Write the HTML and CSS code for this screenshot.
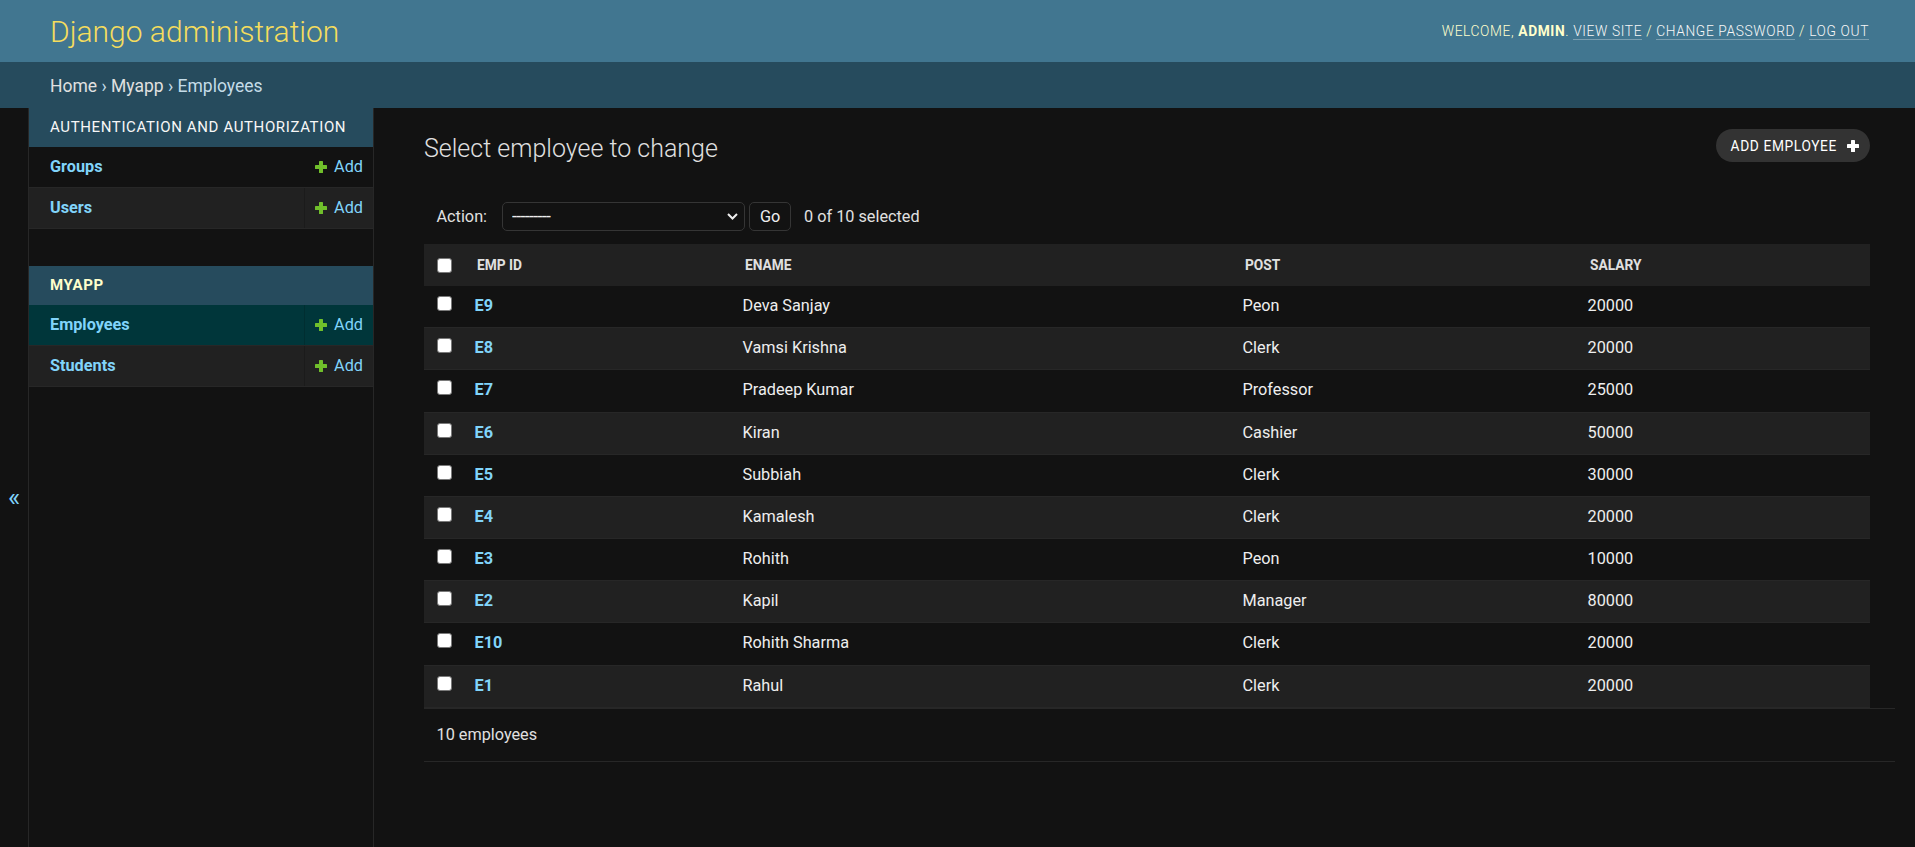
FILE: index.html
```html
<!DOCTYPE html>
<html lang="en">
<head>
<meta charset="utf-8">
<title>Select employee to change | Django site admin</title>
<link rel="stylesheet" href="styles.css">
</head>
<body>
<header class="site-header">
  <div class="branding"><h1 class="site-name">Django administration</h1></div>
  <div class="user-tools">Welcome, <strong>admin</strong>. <a href="#">View site</a> / <a href="#">Change password</a> / <a href="#">Log out</a></div>
</header>
<nav class="breadcrumbs"><a href="#">Home</a> › <a href="#">Myapp</a> › Employees</nav>
<div class="main">
  <div class="toggle-nav" role="button" aria-label="Toggle navigation">«</div>
  <aside class="nav-sidebar">
    <table class="app-module">
      <caption>Authentication and Authorization</caption>
      <tbody>
        <tr><th><a href="#">Groups</a></th><td><a href="#" class="addlink"><svg class="plus" viewBox="0 0 12 12" width="12" height="12"><rect x="4" y="0" width="4" height="12" rx="0.6"/><rect x="0" y="4" width="12" height="4" rx="0.6"/></svg>Add</a></td></tr>
        <tr><th><a href="#">Users</a></th><td><a href="#" class="addlink"><svg class="plus" viewBox="0 0 12 12" width="12" height="12"><rect x="4" y="0" width="4" height="12" rx="0.6"/><rect x="0" y="4" width="12" height="4" rx="0.6"/></svg>Add</a></td></tr>
      </tbody>
    </table>
    <table class="app-module current-app">
      <caption>Myapp</caption>
      <tbody>
        <tr class="current-model"><th><a href="#">Employees</a></th><td><a href="#" class="addlink"><svg class="plus" viewBox="0 0 12 12" width="12" height="12"><rect x="4" y="0" width="4" height="12" rx="0.6"/><rect x="0" y="4" width="12" height="4" rx="0.6"/></svg>Add</a></td></tr>
        <tr><th><a href="#">Students</a></th><td><a href="#" class="addlink"><svg class="plus" viewBox="0 0 12 12" width="12" height="12"><rect x="4" y="0" width="4" height="12" rx="0.6"/><rect x="0" y="4" width="12" height="4" rx="0.6"/></svg>Add</a></td></tr>
      </tbody>
    </table>
  </aside>
  <main class="content">
    <div class="title-row">
      <h1 class="page-title">Select employee to change</h1>
      <a href="#" class="addbtn">Add employee<svg class="plus-white" viewBox="0 0 12 12" width="12" height="12"><rect x="4" y="0" width="4" height="12" rx="0.6"/><rect x="0" y="4" width="12" height="4" rx="0.6"/></svg></a>
    </div>
    <div class="actions">
      <label class="action-label">Action:</label>
      <div class="select-wrap">
        <select class="action-select"><option>---------</option><option>Delete selected employees</option></select>
        <svg class="chev" viewBox="0 0 11 7" width="11" height="7"><path d="M1 1 L5.5 5.5 L10 1" fill="none" stroke="#eeeeee" stroke-width="2"/></svg>
      </div>
      <button class="go-btn">Go</button>
      <span class="counter">0 of 10 selected</span>
    </div>
    <table class="results">
      <colgroup><col class="c-check"><col class="c-id"><col class="c-name"><col class="c-post"><col></colgroup>
      <thead>
        <tr><th class="check-col"><input type="checkbox" class="cb"></th><th>Emp ID</th><th>Ename</th><th>Post</th><th>Salary</th></tr>
      </thead>
      <tbody>
        <tr><td class="check-col"><input type="checkbox" class="cb"></td><th><a href="#">E9</a></th><td>Deva Sanjay</td><td>Peon</td><td>20000</td></tr>
        <tr><td class="check-col"><input type="checkbox" class="cb"></td><th><a href="#">E8</a></th><td>Vamsi Krishna</td><td>Clerk</td><td>20000</td></tr>
        <tr><td class="check-col"><input type="checkbox" class="cb"></td><th><a href="#">E7</a></th><td>Pradeep Kumar</td><td>Professor</td><td>25000</td></tr>
        <tr><td class="check-col"><input type="checkbox" class="cb"></td><th><a href="#">E6</a></th><td>Kiran</td><td>Cashier</td><td>50000</td></tr>
        <tr><td class="check-col"><input type="checkbox" class="cb"></td><th><a href="#">E5</a></th><td>Subbiah</td><td>Clerk</td><td>30000</td></tr>
        <tr><td class="check-col"><input type="checkbox" class="cb"></td><th><a href="#">E4</a></th><td>Kamalesh</td><td>Clerk</td><td>20000</td></tr>
        <tr><td class="check-col"><input type="checkbox" class="cb"></td><th><a href="#">E3</a></th><td>Rohith</td><td>Peon</td><td>10000</td></tr>
        <tr><td class="check-col"><input type="checkbox" class="cb"></td><th><a href="#">E2</a></th><td>Kapil</td><td>Manager</td><td>80000</td></tr>
        <tr><td class="check-col"><input type="checkbox" class="cb"></td><th><a href="#">E10</a></th><td>Rohith Sharma</td><td>Clerk</td><td>20000</td></tr>
        <tr><td class="check-col"><input type="checkbox" class="cb"></td><th><a href="#">E1</a></th><td>Rahul</td><td>Clerk</td><td>20000</td></tr>
      </tbody>
    </table>
    <p class="paginator">10 employees</p>
  </main>
</div>
</body>
</html>
```
FILE: styles.css
```css
* { box-sizing: border-box; }
html, body { margin: 0; padding: 0; }
body {
  font-family: Roboto, "Liberation Sans", Arial, sans-serif;
  font-size: 17.5px;
  color: #eeeeee;
  background: #121212;
}
a { text-decoration: none; color: #81d4fa; }

/* Header */
.site-header {
  display: flex;
  justify-content: space-between;
  align-items: center;
  height: 62px;
  padding: 0 46px 0 50px;
  background: #417690;
}
.site-name {
  margin: 0;
  font-size: 30px;
  font-weight: 300;
  line-height: 35px;
  color: #f5dd5d;
}
.user-tools {
  font-size: 13.75px;
  font-weight: 300;
  letter-spacing: 0.625px;
  text-transform: uppercase;
  color: #ffffcc;
}
.user-tools strong { font-weight: 700; }
.user-tools a {
  color: #f7f7f7;
  border-bottom: 1px solid rgba(255, 255, 255, 0.3);
}

/* Breadcrumbs */
.breadcrumbs {
  height: 46px;
  padding: 14px 50px 12px;
  line-height: 20px;
  background: #264b5d;
  color: #c4dce8;
  font-size: 17.5px;
}
.breadcrumbs a { color: #e0e0e0; }

/* Main */
.main {
  display: flex;
  min-height: calc(100vh - 108px);
}
.toggle-nav {
  flex: 0 0 29px;
  border-right: 1px solid #272727;
  background: #121212;
  color: #81d4fa;
  font-size: 26px;
  line-height: 29px;
  padding-top: 375px;
  text-align: center;
  cursor: pointer;
}

/* Sidebar */
.nav-sidebar {
  flex: 0 0 345px;
  border-right: 1px solid #272727;
  background: #121212;
}
.app-module {
  width: 100%;
  border-collapse: collapse;
  margin-bottom: 37px;
}
.app-module caption {
  text-align: left;
  padding: 10px 10px 10px 21px;
  font-size: 15px;
  line-height: 19px;
  letter-spacing: 0.625px;
  text-transform: uppercase;
  font-weight: 400;
  background: #264b5d;
  color: #f7f7f7;
}
.current-app caption { color: #ffffcc; font-weight: 700; }
.app-module th,
.app-module td {
  height: 40.5px;
  padding: 10px;
  line-height: 20px;
  font-size: 16.25px;
  border-bottom: 1px solid #272727;
  vertical-align: top;
}
.app-module th {
  width: 100%;
  padding-left: 21px;
  text-align: left;
  font-weight: 700;
}
.app-module td {
  white-space: nowrap;
  border-left: 1px solid #121212;
}
.app-module tr:nth-child(odd) { background: #121212; }
.app-module tr:nth-child(even) { background: #212121; }
.app-module tr:nth-child(even) td { border-left-color: #1b1b1b; }
.app-module tr.current-model { background: #00363a; }
.app-module tr.current-model td { border-left-color: #002e31; }
.addlink { color: #81d4fa; }
.plus {
  fill: #70bf2b;
  vertical-align: -1px;
  margin-right: 7px;
}
.plus-white { fill: #ffffff; }

/* Content */
.content {
  flex: 1;
  min-width: 0;
  padding: 26px 20px 0 50px;
}
.title-row {
  display: flex;
  justify-content: space-between;
  align-items: flex-start;
  margin: 0 25px 24px 0;
}
.page-title {
  margin: 0;
  font-size: 25px;
  font-weight: 300;
  line-height: 29.3px;
  color: #e0e0e0;
}
.addbtn {
  margin-top: -5px;
  display: inline-flex;
  align-items: center;
  gap: 10px;
  height: 33px;
  padding: 0 11px 0 15px;
  border-radius: 16.5px;
  background: #333333;
  color: #ffffff;
  font-size: 13.75px;
  letter-spacing: 0.625px;
  text-transform: uppercase;
}

/* Actions */
.actions {
  display: flex;
  align-items: center;
  margin-right: 25px;
  padding: 14.7px 12.5px 13px;
  font-size: 16.25px;
  color: #e0e0e0;
}
.select-wrap {
  position: relative;
  margin-left: 15px;
  width: 243px;
  height: 29px;
}
.action-select {
  appearance: none;
  -webkit-appearance: none;
  width: 100%;
  height: 100%;
  margin: 0;
  padding: 0 0 0 9px;
  background: #121212;
  border: 1px solid #353535;
  border-radius: 5px;
  color: #eeeeee;
  font-family: Roboto, "Liberation Sans", Arial, sans-serif;
  font-size: 17.5px;
  letter-spacing: -0.6px;
}
.chev {
  position: absolute;
  right: 7px;
  top: 11px;
  pointer-events: none;
}
.go-btn {
  margin-left: 4px;
  width: 42px;
  height: 29px;
  padding: 0;
  background: #121212;
  border: 1px solid #353535;
  border-radius: 5px;
  color: #eeeeee;
  font-family: Roboto, "Liberation Sans", Arial, sans-serif;
  font-size: 16.25px;
}
.counter { margin-left: 13px; }

/* Results table */
.results {
  width: calc(100% - 25px);
  table-layout: fixed;
  border-collapse: collapse;
}
.c-check { width: 40.5px; }
.c-id { width: 268px; }
.c-name { width: 500px; }
.c-post { width: 345px; }
.results thead th {
  height: 42px;
  padding: 0 12.5px;
  vertical-align: middle;
  background: #212121;
  color: #e0e0e0;
  font-size: 13.75px;
  font-weight: 700;
  text-transform: uppercase;
  text-align: left;
  white-space: nowrap;
}
.results tbody td,
.results tbody th {
  padding: 10px 10px 11.2px;
  line-height: 20px;
  font-size: 16.25px;
  text-align: left;
  vertical-align: top;
  border-bottom: 1px solid #272727;
  color: #eeeeee;
}
.results tbody th { font-weight: 700; }
.results tbody tr:nth-child(odd) { background: #121212; }
.results tbody tr:nth-child(even) { background: #212121; }
.results .check-col {
  text-align: center;
  padding-left: 0;
  padding-right: 0;
}
.results tbody .check-col { padding-top: 10px; }
.cb {
  appearance: none;
  -webkit-appearance: none;
  display: inline-block;
  vertical-align: top;
  width: 15px;
  height: 15px;
  margin: 0;
  background: #ffffff;
  border: 1px solid #7a7a7a;
  border-radius: 3px;
}
.results thead .cb { vertical-align: middle; }

/* Paginator */
.paginator {
  margin: 0;
  padding: 12.5px;
  line-height: 27.5px;
  font-size: 16.25px;
  color: #e0e0e0;
  border-top: 1px solid #272727;
  border-bottom: 1px solid #272727;
}
```
